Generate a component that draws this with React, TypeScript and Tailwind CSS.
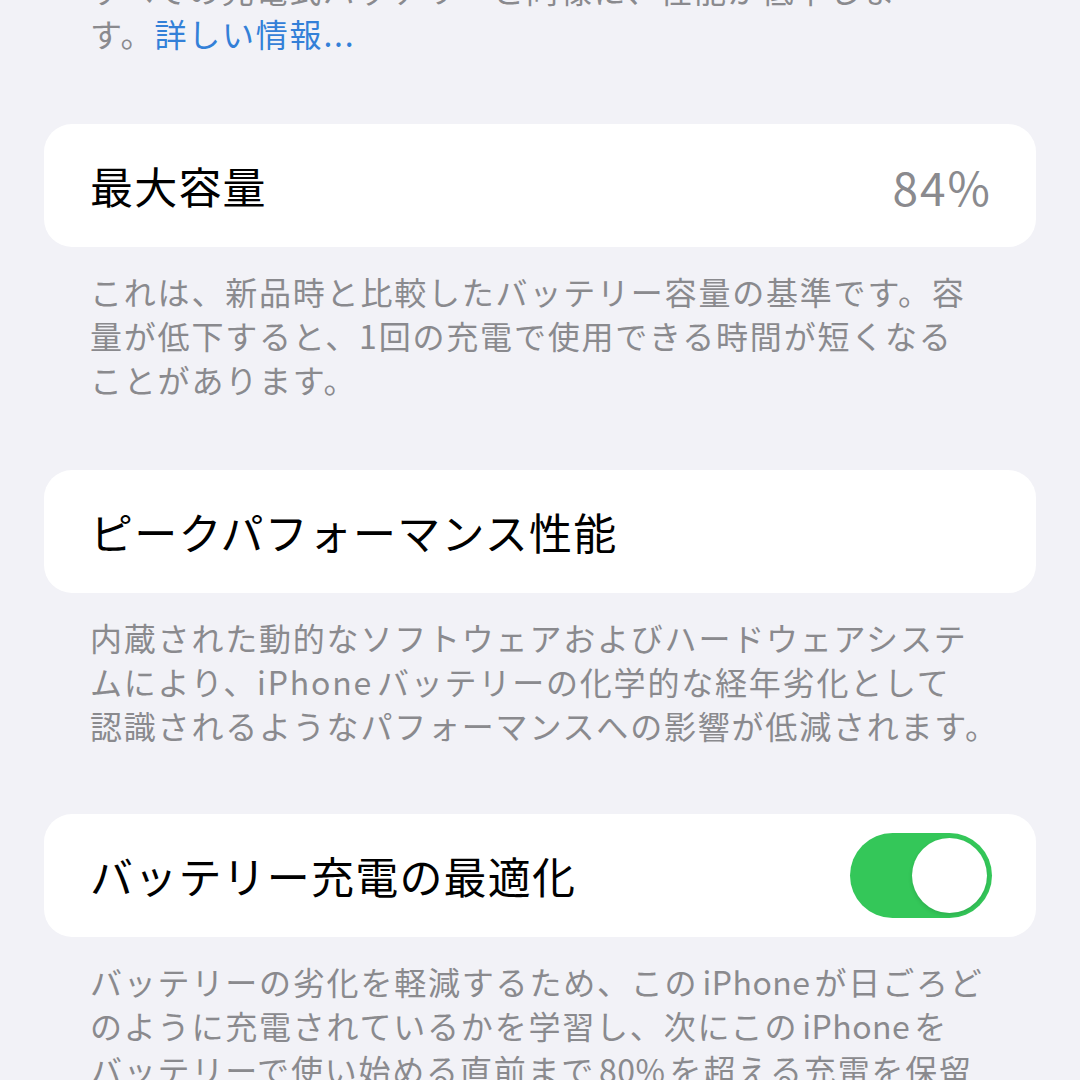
import React from 'react';

const font = { fontFamily: '"Noto Sans CJK JP", "Noto Sans", sans-serif' };

// latin words inside japanese text get a little breathing room, like iOS does
const L: React.FC<{ children: React.ReactNode }> = ({ children }) => (
  <span className="mx-[4px] tracking-[0.5px]">{children}</span>
);

const Card: React.FC<{ title: string; right?: React.ReactNode }> = ({ title, right }) => (
  <div className="flex h-[123px] items-center justify-between rounded-[28px] bg-white pl-[46px] pr-[44px]">
    <span className="whitespace-nowrap text-[43px] leading-none tracking-[1.2px] text-black">{title}</span>
    {right}
  </div>
);

const Footer: React.FC<{ lines: React.ReactNode[] }> = ({ lines }) => (
  <div className="pl-[46px] pt-[22px] text-[32px] leading-[44px] tracking-[1.8px] text-[#8a8a8e]">
    {lines.map((l, i) => (
      <div key={i} className="whitespace-nowrap">
        {l}
      </div>
    ))}
  </div>
);

const Toggle: React.FC = () => (
  <div className="flex h-[85px] w-[142px] items-center justify-end rounded-full bg-[#34c759] pr-[5px]">
    <div className="h-[75px] w-[75px] rounded-full bg-white shadow-[0_2px_4px_rgba(0,0,0,0.12)]" />
  </div>
);

export default function App() {
  return (
    <div className="h-[1080px] w-[1080px] overflow-hidden bg-[#f2f2f7] px-[44px]" style={font}>
      {/* cut-off header footnote */}
      <div className="mt-[-33px] pl-[46px] text-[32px] leading-[44px] tracking-[1.8px] text-[#8a8a8e]">
        <div className="whitespace-nowrap">すべての充電式バッテリーと同様に、性能が低下しま</div>
        <div className="whitespace-nowrap">
          す。<span className="text-[#3380d8]">詳しい情報...</span>
        </div>
      </div>

      <div className="mt-[69px]">
        <Card
          title="最大容量"
          right={<span className="text-[46px] leading-none tracking-[2px] text-[#8a8a8e]">84%</span>}
        />
        <Footer
          lines={[
            'これは、新品時と比較したバッテリー容量の基準です。容',
            '量が低下すると、1回の充電で使用できる時間が短くなる',
            'ことがあります。',
          ]}
        />
      </div>

      <div className="mt-[69px]">
        <Card title="ピークパフォーマンス性能" />
        <Footer
          lines={[
            '内蔵された動的なソフトウェアおよびハードウェアシステ',
            <>
              ムにより、iPhone<span className="ml-[4px]" />バッテリーの化学的な経年劣化として
            </>,
            '認識されるようなパフォーマンスへの影響が低減されます。',
          ]}
        />
      </div>

      <div className="mt-[67px]">
        <Card title="バッテリー充電の最適化" right={<Toggle />} />
        <Footer
          lines={[
            <>
              バッテリーの劣化を軽減するため、この<L>iPhone</L>が日ごろど
            </>,
            <>
              のように充電されているかを学習し、次にこの<L>iPhone</L>を
            </>,
            <>
              バッテリーで使い始める直前まで<L>80%</L>を超える充電を保留
            </>,
          ]}
        />
      </div>
    </div>
  );
}
